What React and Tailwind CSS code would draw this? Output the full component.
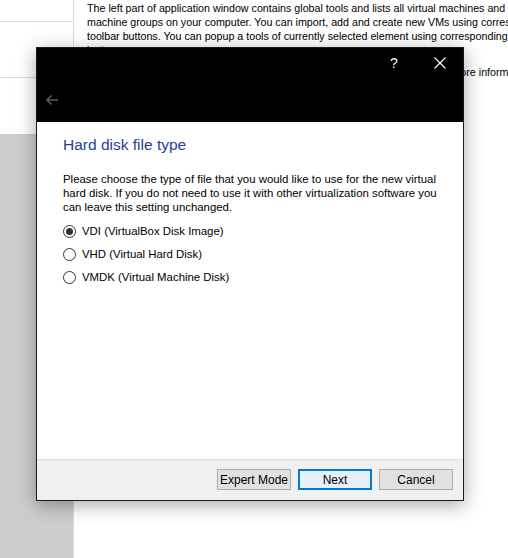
import React, { useState } from "react";

export default function App() {
  const [format, setFormat] = useState("vdi");

  const formats = [
    { id: "vdi", label: "VDI (VirtualBox Disk Image)" },
    { id: "vhd", label: "VHD (Virtual Hard Disk)" },
    { id: "vmdk", label: "VMDK (Virtual Machine Disk)" }
  ];

  return (
    <div className="relative w-[508px] h-[558px] overflow-hidden bg-white text-[11px] text-[#000] font-['Liberation_Sans',Tahoma,sans-serif]">
      <div className="flex h-full">
        <div className="w-[74px] shrink-0 flex flex-col border-r border-[#dadada]">
          <div className="h-[22px] border-b border-[#dcdcdc]" />
          <div className="h-[56px] border-b border-[#dcdcdc]" />
          <div className="h-[56px]" />
          <div className="flex-1 bg-[#cdcdcd]" />
        </div>
        <div className="flex-1 min-w-0 overflow-hidden pl-[13px] pt-[1px] text-[10.7px] leading-[14px] whitespace-nowrap">
          <p>The left part of application window contains global tools and lists all virtual machines and</p>
          <p>machine groups on your computer. You can import, add and create new VMs using corresponding</p>
          <p>toolbar buttons. You can popup a tools of currently selected element using corresponding element</p>
          <p>button.</p>
          <p className="mt-[8px] pl-[349px]">for more information</p>
        </div>
      </div>

      <div className="absolute left-[36px] top-[47px] w-[428px] h-[454px] border border-[#1a1a1a] bg-white flex flex-col shadow-[0_4px_18px_rgba(0,0,0,0.35)]">
        <div className="h-[74px] bg-black flex flex-col">
          <div className="h-[30px] flex justify-end items-center text-white">
            <span className="w-[46px] text-center text-[14px]">?</span>
            <span className="w-[46px] flex justify-center">
              <svg width="12" height="12" viewBox="0 0 12 12" stroke="#fff" strokeWidth="1.1">
                <path d="M0.5 0.5 L11.5 11.5 M11.5 0.5 L0.5 11.5" />
              </svg>
            </span>
          </div>
          <div className="flex-1 flex items-center pl-[8px]">
            <svg width="14" height="12" viewBox="0 0 14 12" fill="none" stroke="#5a5a5a" strokeWidth="1.6">
              <path d="M13 6 H2 M6.5 1.5 L2 6 L6.5 10.5" />
            </svg>
          </div>
        </div>

        <div className="flex-1 pl-[26px] pr-[12px]">
          <h1 className="mt-[14px] text-[15.5px] leading-[18px] text-[#1f3f98]">Hard disk file type</h1>
          <p className="mt-[18px] text-[11.4px] leading-[14px]">
            Please choose the type of file that you would like to use for the new virtual hard disk. If you do not need to use it with other virtualization software you can leave this setting unchanged.
          </p>
          <div className="mt-[11px] flex flex-col gap-[10px] text-[11.4px]">
            {formats.map((f) => (
              <label key={f.id} className="flex items-center gap-[6px] h-[13px] leading-[13px]" onClick={() => setFormat(f.id)}>
                <span className="w-[13px] h-[13px] rounded-full border border-[#333] bg-white flex items-center justify-center">
                  {format === f.id && <span className="w-[7px] h-[7px] rounded-full bg-[#333]" />}
                </span>
                <span>{f.label}</span>
              </label>
            ))}
          </div>
        </div>

        <div className="h-[41px] bg-[#f0f0f0] border-t border-[#dfdfdf] flex items-center justify-end gap-[7px] pr-[10px] pb-[1px]">
          <button className="w-[74px] h-[21px] bg-[#e1e1e1] border border-[#adadad] text-[12px]">Expert Mode</button>
          <button className="w-[74px] h-[21px] bg-[#e5f1fb] border-2 border-[#0078d7] text-[12px]">Next</button>
          <button className="w-[74px] h-[21px] bg-[#e1e1e1] border border-[#adadad] text-[12px]">Cancel</button>
        </div>
      </div>
    </div>
  );
}
